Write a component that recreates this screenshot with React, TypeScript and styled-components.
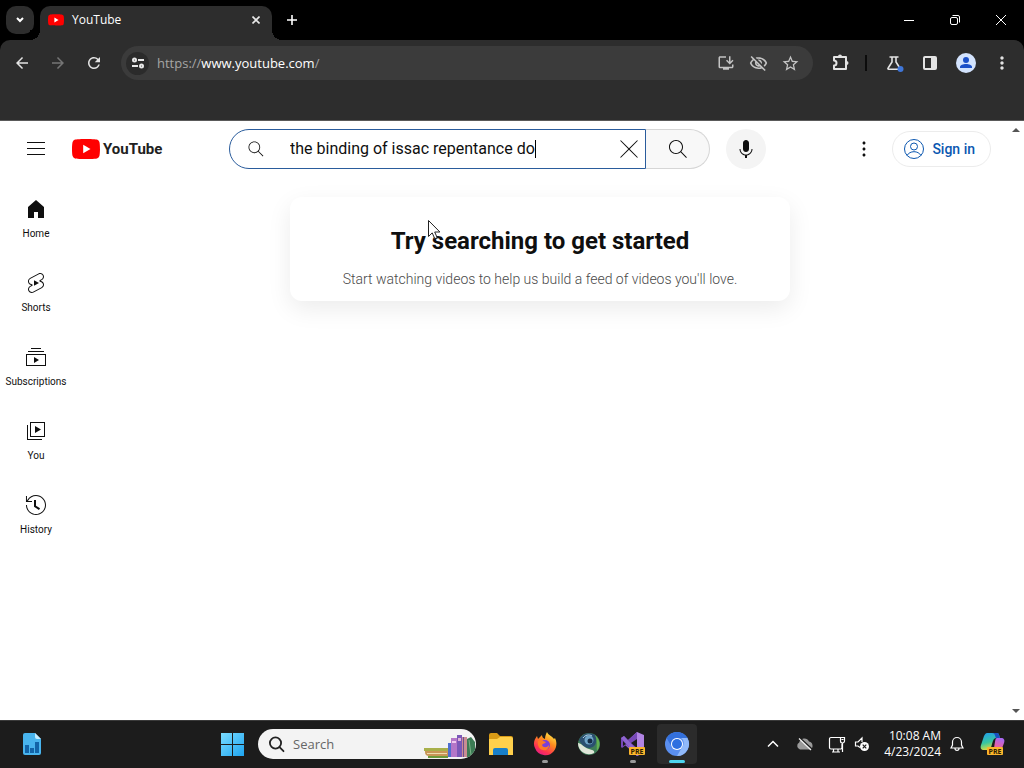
import React from "react";
import styled, { createGlobalStyle } from "styled-components";
import {
  MdArrowBack,
  MdArrowForward,
  MdRefresh,
  MdStarBorder,
  MdOutlineInstallDesktop,
  MdOutlineVisibilityOff,
  MdMoreVert,
} from "react-icons/md";

const GlobalStyle = createGlobalStyle`
  * { box-sizing: border-box; }
  html, body { margin: 0; padding: 0; background: #fff; }
  button { font: inherit; color: inherit; border: 0; padding: 0; background: none; cursor: pointer; }
  svg { display: block; flex: none; }
  h1, p, ul { margin: 0; padding: 0; }
`;

const UI_FONT = `"Open Sans", "Noto Sans", sans-serif`;
const PAGE_FONT = `Roboto, "Liberation Sans", sans-serif`;

const Desktop = styled.div`
  min-height: 100vh;
  display: flex;
  flex-direction: column;
`;

/* ---------- Browser frame ---------- */

const TabStrip = styled.header`
  display: flex;
  align-items: flex-end;
  height: 40px;
  background: #000;
  color: #fff;
  font-family: ${UI_FONT};
`;

const TabListButton = styled.button`
  display: grid;
  place-items: center;
  width: 28px;
  height: 28px;
  margin: 0 6px;
  align-self: center;
  border-radius: 10px;
  background: #2d2d2d;
`;

const Tab = styled.div`
  position: relative;
  display: flex;
  align-items: center;
  gap: 8px;
  width: 232px;
  height: 34px;
  padding: 0 8px 6px;
  border-radius: 10px 10px 0 0;
  background: #2d2d2d;
  font-size: 12px;
  line-height: 16px;

  &::before,
  &::after {
    content: "";
    position: absolute;
    bottom: 0;
    width: 10px;
    height: 10px;
  }
  &::before {
    right: 100%;
    background: radial-gradient(circle at 0 0, #000 10px, #2d2d2d 10px);
  }
  &::after {
    left: 100%;
    background: radial-gradient(circle at 100% 0, #000 10px, #2d2d2d 10px);
  }
`;

const TabTitle = styled.span`
  flex: 1;
`;

const SmallButton = styled.button`
  display: grid;
  place-items: center;
  width: 16px;
  height: 16px;
`;

const NewTabButton = styled.button`
  display: grid;
  place-items: center;
  width: 28px;
  height: 28px;
  margin-left: 6px;
  align-self: center;
`;

const WindowControls = styled.div`
  display: flex;
  margin-left: auto;
  height: 40px;
`;

const WindowButton = styled.button`
  display: grid;
  place-items: center;
  width: 46px;
`;

const ToolbarBack = styled.div`
  background: #000;
`;

const Toolbar = styled.nav`
  display: flex;
  align-items: center;
  height: 81px;
  padding: 0 8px 34px;
  border-radius: 10px 10px 0 0;
  border-bottom: 1px solid #5a5a5a;
  background: #2d2d2d;
  color: #dedede;
  font-family: ${UI_FONT};
`;

const NavButtons = styled.div`
  display: flex;
  gap: 8px;
`;

const ToolButton = styled.button<{ $dim?: boolean }>`
  position: relative;
  display: grid;
  place-items: center;
  width: 28px;
  height: 28px;
  color: ${(p) => (p.$dim ? "#757575" : "#e3e3e3")};
`;

const Omnibox = styled.div`
  display: flex;
  align-items: center;
  flex: 1;
  height: 34px;
  margin: 0 13px;
  padding: 0 9px 0 5px;
  border-radius: 17px;
  background: #3b3b3b;
`;

const SiteInfo = styled.button`
  display: grid;
  place-items: center;
  width: 23px;
  height: 23px;
  border-radius: 50%;
  background: #2b2b2b;
`;

const Address = styled.span`
  flex: 1;
  margin-left: 8px;
  font-size: 13px;
  line-height: 20px;
  color: #a5a5a5;

  b {
    font-weight: 400;
    color: #fff;
  }
`;

const OmniActions = styled.div`
  display: flex;
  gap: 4px;
  color: #c4c4c4;
`;

const OmniButton = styled.button`
  display: grid;
  place-items: center;
  width: 28px;
  height: 28px;
`;

const Divider = styled.span`
  width: 2px;
  height: 16px;
  margin: 0 13px 0 11px;
  background: #0c0c0c;
`;

/* ---------- Page ---------- */

const Viewport = styled.div`
  flex: 1;
  display: flex;
  background: #fff;
  color: #0f0f0f;
  font-family: ${PAGE_FONT};
`;

const Site = styled.div`
  flex: 1;
  min-width: 0;
`;

const ScrollBar = styled.div`
  display: flex;
  flex-direction: column;
  justify-content: space-between;
  align-items: center;
  width: 16px;
  padding: 7px 0;
  background: #fff;
`;

const Masthead = styled.header`
  display: flex;
  align-items: center;
  height: 56px;
  padding: 0 17px 0 24px;
`;

const Brand = styled.div`
  display: flex;
  align-items: center;
  gap: 24px;
  width: 205px;
`;

const IconButton = styled.button`
  display: grid;
  place-items: center;
  width: 24px;
  height: 24px;
`;

const LogoLink = styled.a`
  display: flex;
  align-items: center;
  gap: 3px;
  color: #212121;
  text-decoration: none;
  font: 700 15px/24px Roboto, "Liberation Sans", sans-serif;
`;

const SearchForm = styled.form`
  display: flex;
  flex: 1;
  height: 40px;
`;

const SearchBox = styled.label`
  display: flex;
  align-items: center;
  flex: 1;
  min-width: 0;
  padding: 0 4px 0 16px;
  border: 1px solid #2a5c9c;
  border-radius: 20px 0 0 20px;
  background: #fff;
`;

const SearchInput = styled.input`
  width: 245px;
  min-width: 0;
  height: 24px;
  margin: 0 0 0 24px;
  padding: 0;
  border: 0;
  outline: 0;
  background: none;
  color: #0f0f0f;
  font: 400 16px/24px ${PAGE_FONT};
`;

const Caret = styled.span`
  width: 1px;
  height: 18px;
  background: #000;
`;

const ClearButton = styled(IconButton)`
  margin-left: auto;
`;

const SubmitButton = styled.button`
  display: grid;
  place-items: center;
  width: 64px;
  border: 1px solid #d6d6d6;
  border-left: 0;
  border-radius: 0 20px 20px 0;
  background: #f8f8f8;
`;

const MicButton = styled.button`
  display: grid;
  place-items: center;
  width: 40px;
  height: 40px;
  margin-left: 16px;
  border-radius: 50%;
  background: #f4f4f4;
`;

const Account = styled.div`
  display: flex;
  align-items: center;
  gap: 16px;
  margin-left: 86px;
`;

const SignIn = styled.a`
  display: flex;
  align-items: center;
  gap: 6px;
  height: 36px;
  padding: 0 15px 0 9px;
  border: 1px solid #ececec;
  border-radius: 18px;
  color: #0b57b0;
  font-size: 14px;
  font-weight: 500;
  text-decoration: none;
`;

const Body = styled.div`
  display: flex;
`;

const MiniGuide = styled.nav`
  width: 72px;
  padding-top: 4px;
`;

const GuideLink = styled.a`
  display: flex;
  flex-direction: column;
  align-items: center;
  gap: 6px;
  height: 74px;
  padding-top: 16px;
  color: #0f0f0f;
  font-size: 10px;
  line-height: 14px;
  text-decoration: none;
`;

const Feed = styled.main`
  flex: 1;
  display: flex;
  justify-content: center;
  align-items: flex-start;
  padding: 20px 16px;
`;

const Nudge = styled.section`
  position: relative;
  width: 500px;
  max-width: 100%;
  padding: 28px 24px 12px;
  border-radius: 12px;
  box-shadow: 0 8px 24px rgba(0, 0, 0, 0.08);
  text-align: center;

  h1 {
    font-size: 24px;
    font-weight: 700;
    line-height: 32px;
  }
  p {
    margin-top: 12px;
    color: #4a4a4a;
    font-size: 14px;
    font-weight: 300;
    line-height: 20px;
  }
`;

const Pointer = styled.svg`
  position: absolute;
  left: 138px;
  top: 23px;
`;

/* ---------- Taskbar ---------- */

const Taskbar = styled.footer`
  display: flex;
  align-items: center;
  height: 48px;
  box-shadow: inset 0 1px #3a3a3a;
  background: #1c1c1c;
  color: #fff;
  font-family: ${UI_FONT};
`;

const Widgets = styled.div`
  display: flex;
  flex: 1;
  padding-left: 20px;
`;

const Apps = styled.div`
  display: flex;
  align-items: center;
`;

const AppButton = styled.button<{ $state?: "running" | "active" }>`
  position: relative;
  display: grid;
  place-items: center;
  width: 40px;
  height: 40px;
  margin: 0 2px;
  border-radius: 4px;
  background: ${(p) => (p.$state === "active" ? "#2b2b2b" : "none")};

  &::after {
    content: "";
    display: ${(p) => (p.$state ? "block" : "none")};
    position: absolute;
    bottom: 1px;
    left: 50%;
    transform: translateX(-50%);
    width: ${(p) => (p.$state === "active" ? "16px" : "6px")};
    height: 3px;
    border-radius: 2px;
    background: ${(p) => (p.$state === "active" ? "#4cd4ee" : "#9a9a9a")};
  }
`;

const TaskSearch = styled.label`
  display: flex;
  align-items: center;
  gap: 8px;
  width: 218px;
  height: 30px;
  margin: 0 3px 0 4px;
  padding-left: 10px;
  border-radius: 15px;
  overflow: hidden;
  background: #f3f3f3;
  color: #2b2b2b;

  input {
    flex: 1;
    min-width: 0;
    padding: 0;
    border: 0;
    outline: 0;
    background: none;
    font: 400 13px/20px ${UI_FONT};
  }
  input::placeholder {
    color: #666;
    opacity: 1;
  }
`;

const Tray = styled.div`
  display: flex;
  align-items: center;
  margin-left: 58px;
  padding-right: 18px;
`;

const TrayButton = styled.button<{ $narrow?: boolean }>`
  display: grid;
  place-items: center;
  width: ${(p) => (p.$narrow ? "18px" : "32px")};
  height: 32px;
`;

const Clock = styled.time`
  width: 70px;
  text-align: right;
  font-size: 12px;
  line-height: 16px;
  white-space: nowrap;
`;

const BellButton = styled(TrayButton)`
  margin-right: 7px;
`;

const Glyph = ({ d, size = 24 }: { d: string; size?: number }) => (
  <svg width={size} height={size} viewBox="0 0 24 24" fill="currentColor" aria-hidden="true">
    <path d={d} />
  </svg>
);

const SEARCH =
  "m20.87 20.17-5.59-5.59C16.35 13.35 17 11.75 17 10c0-3.87-3.13-7-7-7s-7 3.13-7 7 3.13 7 7 7c1.75 0 3.35-.65 4.58-1.71l5.59 5.59.7-.71zM10 16c-3.31 0-6-2.69-6-6s2.69-6 6-6 6 2.69 6 6-2.69 6-6 6z";
const CLOSE =
  "m12.71 12 8.15 8.15-.71.71L12 12.71l-8.15 8.15-.71-.71L11.29 12 3.15 3.85l.71-.71L12 11.29l8.15-8.15.71.71L12.71 12z";
const MIC =
  "M12 3c-1.66 0-3 1.37-3 3.07v5.86c0 1.7 1.34 3.07 3 3.07s3-1.37 3-3.07V6.07C15 4.37 13.66 3 12 3zm6.5 9h-1c0 3.03-2.47 5.5-5.5 5.5S6.5 15.03 6.5 12h-1c0 3.24 2.39 5.93 5.5 6.41V21h2v-2.59c3.11-.48 5.5-3.17 5.5-6.41z";

const guide = [
  { label: "Home", d: "M4 21V10.08l8-6.96 8 6.96V21h-6v-6h-4v6H4z" },
  {
    label: "Shorts",
    d: "M10 14.65v-5.3L15 12l-5 2.65zm7.77-4.33-1.2-.5L18 9.06c1.84-.96 2.53-3.23 1.56-5.06s-3.24-2.53-5.07-1.56L6 6.94c-1.29.68-2.07 2.04-2 3.49.07 1.42.93 2.67 2.22 3.25.03.01 1.2.5 1.2.5L6 14.93c-1.83.97-2.53 3.24-1.56 5.07.97 1.83 3.24 2.53 5.07 1.56l8.5-4.5c1.29-.68 2.06-2.04 1.99-3.49-.07-1.42-.94-2.68-2.23-3.25zm-.23 5.86-8.5 4.5c-1.34.71-3.01.2-3.72-1.14-.71-1.34-.2-3.01 1.14-3.72l2.04-1.08v-1.21l-.69-.28-1.11-.46c-.99-.41-1.65-1.35-1.7-2.41-.05-1.06.52-2.06 1.46-2.56l8.5-4.5c1.34-.71 3.01-.2 3.72 1.14.71 1.34.2 3.01-1.14 3.72L15.5 9.26v1.21l1.8.74c.99.41 1.65 1.35 1.7 2.41.05 1.06-.52 2.06-1.46 2.56z",
  },
  { label: "Subscriptions", d: "M10 18v-6l5 3-5 3zm7-15H7v1h10V3zm3 3H4v1h16V6zm2 3H2v12h20V9zM3 10h18v10H3V10z" },
  { label: "You", d: "m11 7 6 3.5-6 3.5V7zm7 13H4V6H3v15h15v-1zm3-2H6V3h15v15zM7 17h13V4H7v13z" },
  {
    label: "History",
    d: "M14.97 16.95 10 13.87V7h2v5.76l4.03 2.49-1.06 1.7zM22 12c0 5.51-4.49 10-10 10S2 17.51 2 12h1c0 4.96 4.04 9 9 9s9-4.04 9-9-4.04-9-9-9C8.81 3 5.92 4.64 4.28 7.38c-.11.18-.22.37-.31.56L3.94 8H8v1H1.96V3h1v4.74c.04-.09.07-.17.11-.25.11-.22.23-.42.35-.63C5.22 3.86 8.51 2 12 2c5.51 0 10 4.49 10 10z",
  },
];

const PlayBadge = ({ width, height }: { width: number; height: number }) => (
  <svg width={width} height={height} viewBox="0 0 28 20" aria-hidden="true">
    <path
      fill="#f00"
      d="M27.4 3.1A3.5 3.5 0 0 0 25 .6C22.8 0 14 0 14 0S5.200 0 3 .6A3.500 3.500 0 0 0 .6 3.100C0 5.300 0 10 0 10s0 4.700.6 6.900A3.500 3.500 0 0 0 3 19.400C5.200 20 14 20 14 20s8.800 0 11-.6a3.500 3.500 0 0 0 2.400-2.500C28 14.700 28 10 28 10s0-4.700-.6-6.900z"
    />
    <path fill="#fff" d="M11.200 14.300 18.500 10l-7.300-4.300z" />
  </svg>
);

const PreTag = ({ x, y }: { x: number; y: number }) => (
  <g>
    <rect x={x} y={y} width="16" height="8" rx="1" fill="#fbb52c" />
    <text x={x + 8} y={y + 7} textAnchor="middle" fontFamily="Open Sans, sans-serif" fontSize="7" fontWeight="700" fill="#2b1c00">
      PRE
    </text>
  </g>
);

const WidgetIcon = () => (
  <svg width="24" height="24" viewBox="0 0 24 24">
    <path d="M5 1h10l6 6v14a2 2 0 0 1-2 2H5a2 2 0 0 1-2-2V3a2 2 0 0 1 2-2z" fill="#48b4ee" />
    <path d="M15 1l6 6h-4a2 2 0 0 1-2-2z" fill="#c5edff" />
    <path d="M5 13h4v8H5zM10 16h4v5h-4zM15 10h4v11h-4z" fill="#1264a8" />
  </svg>
);

const StartIcon = () => (
  <svg width="24" height="24" viewBox="0 0 24 24">
    <defs>
      <linearGradient id="win" x1="0" y1="0" x2="1" y2="1" gradientUnits="objectBoundingBox">
        <stop offset="0" stopColor="#7adcff" />
        <stop offset="1" stopColor="#1ea4f0" />
      </linearGradient>
    </defs>
    <path fill="url(#win)" d="M1 1h11v11H1zM13 1h11v11H13zM1 13h11v11H1zM13 13h11v11H13z" />
  </svg>
);

const BooksArt = () => (
  <svg width="52" height="30" viewBox="0 0 52 30">
    <path d="M0 19h24v3H0z" fill="#a8b04a" />
    <path d="M1 22h23v5H5a4 4 0 0 1-4-4z" fill="#c99657" />
    <path d="M3 24h20v1H3z" fill="#efdcae" />
    <path d="M4 27h20v2H4z" fill="#6e9a3c" />
    <rect x="24" y="14" width="3" height="14" fill="#4f6fd0" />
    <rect x="27" y="9" width="6" height="19" fill="#b476c8" />
    <rect x="28" y="12" width="4" height="2" fill="#f0c8f0" />
    <rect x="33" y="6" width="5" height="22" fill="#7b58b8" />
    <rect x="34" y="9" width="3" height="3" fill="#e0b0d8" />
    <rect x="38" y="8" width="5" height="20" fill="#c98c94" />
    <path d="M39 8h1v20h-1z" fill="#6a5390" />
    <path d="M43 10l4-2 4 5v13l-5 2h-3z" fill="#3c7a54" />
    <path d="M45 11l2 15" stroke="#7ab486" />
  </svg>
);

const ExplorerIcon = () => (
  <svg width="26" height="24" viewBox="0 0 26 24">
    <path d="M1 3a2 2 0 0 1 2-2h6l3 3h11a2 2 0 0 1 2 2v4H1z" fill="#d99b16" />
    <path d="M1 7h8l3-2h11a2 2 0 0 1 2 2v16H1z" fill="#ffd04c" />
    <path d="M5 23v-5a2 2 0 0 1 2-2h11a2 2 0 0 1 2 2v5z" fill="#187fc9" />
  </svg>
);

const FirefoxIcon = () => (
  <svg width="24" height="24" viewBox="0 0 24 24">
    <defs>
      <linearGradient id="fox" x1=".8" y1="0" x2=".2" y2="1">
        <stop offset="0" stopColor="#fff04a" />
        <stop offset=".4" stopColor="#ff8a1e" />
        <stop offset=".75" stopColor="#ff3350" />
        <stop offset="1" stopColor="#e01890" />
      </linearGradient>
    </defs>
    <path
      fill="url(#fox)"
      d="M14 0c1 3 5 4 7 7l1-1c2 4 2 9-1 13a11 11 0 0 1-19-3C0 12 1 8 4 4l1 3 4-4c0 2 1 3 3 4 0-3 1-5 2-7z"
    />
    <circle cx="12" cy="13" r="5" fill="#7a3fd8" />
    <path d="M5 9c3-2 5 0 8 1-1 2-3 1-4 3 1 3 5 3 7 0 0 4-3 6-6 5-3 0-6-4-5-9z" fill="#ff7a24" />
  </svg>
);

const GlobeIcon = () => (
  <svg width="24" height="24" viewBox="0 0 24 24">
    <circle cx="12" cy="12" r="11" fill="#3e7c58" />
    <path d="M2 8A11 11 0 0 1 18 3c3 7 0 13-6 13-5 0-8-4-10-8z" fill="#2b4f70" />
    <path d="M1 11c3 0 5 4 11 6 4 1 6 2 5 4A11 11 0 0 1 1 11z" fill="#dfe5d8" />
    <circle cx="12" cy="8" r="4.500" fill="#6fa4c8" />
    <circle cx="13" cy="9" r="2.500" fill="#142c46" />
    <path d="M6 6c2-3 6-4 9-2" stroke="#b8d8ea" fill="none" />
    <path d="M18 3c5 4 6 11 2 16-1-5 1-10-2-16z" fill="#62b050" />
  </svg>
);

const StudioIcon = () => (
  <svg width="28" height="26" viewBox="0 0 28 26">
    <path d="M18 1l7 3v18l-7 3L5 13z" fill="#b184e4" />
    <path d="M18 1v24L7 14l-4 3-1-1V7l3-2 4 4z" fill="#7748b8" />
    <path d="M18 8v9l-6-5z" fill="#1c1c1c" />
    <path d="M4 10v5l3-2z" fill="#1c1c1c" />
    <path d="M2 7l3-2 13 14v6z" fill="#8f65d0" />
    <PreTag x={10} y={16} />
  </svg>
);

const ChromiumIcon = () => (
  <svg width="26" height="26" viewBox="0 0 26 26">
    <circle cx="13" cy="13" r="12" fill="#5a8ff0" />
    <path d="M2.600 7A12 12 0 0 1 23.400 7H13a6 6 0 0 0-5.200 9z" fill="#3370dc" />
    <path d="M23.400 7A12 12 0 0 1 13 25l5.200-9a6 6 0 0 0-1-9z" fill="#90b9fa" />
    <circle cx="13" cy="13" r="6" fill="#fff" />
    <circle cx="13" cy="13" r="5" fill="#2d6fe0" />
  </svg>
);

const CopilotIcon = () => (
  <svg width="26" height="26" viewBox="0 0 26 26">
    <defs>
      <linearGradient id="copA" x1="0" y1="0" x2=".3" y2="1">
        <stop offset="0" stopColor="#1f9cf0" />
        <stop offset=".6" stopColor="#38c6a0" />
        <stop offset="1" stopColor="#d8dc40" />
      </linearGradient>
      <linearGradient id="copB" x1=".6" y1="0" x2=".3" y2="1">
        <stop offset="0" stopColor="#a868f0" />
        <stop offset=".6" stopColor="#f0609a" />
        <stop offset="1" stopColor="#ffa060" />
      </linearGradient>
    </defs>
    <path d="M7 2h10c2 0 2 2 3 5h-4c-2 0-3 2-4 6s-2 6-5 6H4c-3 0-4-2-3-5L4 5c1-2 2-3 3-3z" fill="url(#copA)" />
    <path d="M12 2h5c2 0 2 2 3 5h-4c-1-2-1-5-4-5z" fill="#1a50c0" />
    <path d="M17 7h4c3 0 4 2 3 5l-3 8c-1 2-2 3-4 3h-6c2-1 3-4 3-6 1-5 1-10 3-10z" fill="url(#copB)" />
    <PreTag x={7} y={16} />
  </svg>
);

export default function App() {
  return (
    <Desktop>
      <GlobalStyle />
      <TabStrip>
        <TabListButton aria-label="Search tabs">
          <svg width="10" height="10" viewBox="0 0 10 10" fill="none" stroke="#fff" strokeWidth="2">
            <path d="M2 3l3 3 3-3" />
          </svg>
        </TabListButton>
        <Tab>
          <PlayBadge width={16} height={12} />
          <TabTitle>YouTube</TabTitle>
          <SmallButton aria-label="Close tab">
            <svg width="8" height="8" viewBox="0 0 8 8" stroke="#e8e8e8" strokeWidth="1.600">
              <path d="M.5.500l7 7M7.500.500l-7 7" />
            </svg>
          </SmallButton>
        </Tab>
        <NewTabButton aria-label="New tab">
          <svg width="10" height="10" viewBox="0 0 10 10" stroke="#fff" strokeWidth="1.600">
            <path d="M5 0v10M0 5h10" />
          </svg>
        </NewTabButton>
        <WindowControls>
          <WindowButton aria-label="Minimize">
            <svg width="10" height="10" viewBox="0 0 10 10" stroke="#fff">
              <path d="M0 5.500h10" />
            </svg>
          </WindowButton>
          <WindowButton aria-label="Restore">
            <svg width="10" height="10" viewBox="0 0 10 10" fill="none" stroke="#fff">
              <rect x=".5" y="2.500" width="7" height="7" rx="1.500" />
              <path d="M2.500.500H8A1.500 1.500 0 0 1 9.500 2v5.500" />
            </svg>
          </WindowButton>
          <WindowButton aria-label="Close">
            <svg width="10" height="10" viewBox="0 0 10 10" stroke="#fff">
              <path d="M0 0l10 10M10 0L0 10" />
            </svg>
          </WindowButton>
        </WindowControls>
      </TabStrip>

      <ToolbarBack>
        <Toolbar>
          <NavButtons>
            <ToolButton aria-label="Back"><MdArrowBack size={18} /></ToolButton>
            <ToolButton aria-label="Forward" $dim><MdArrowForward size={18} /></ToolButton>
            <ToolButton aria-label="Reload"><MdRefresh size={18} /></ToolButton>
          </NavButtons>
          <Omnibox>
            <SiteInfo aria-label="View site information">
              <svg width="14" height="14" viewBox="0 0 14 14" fill="none" stroke="#e8e8e8" strokeWidth="2">
                <circle cx="3.500" cy="4" r="1.500" />
                <path d="M7 4h6M1 10h6" />
                <circle cx="10.500" cy="10" r="1.500" />
              </svg>
            </SiteInfo>
            <Address>
              https://<b>www.youtube.com</b>/
            </Address>
            <OmniActions>
              <OmniButton aria-label="Install app"><MdOutlineInstallDesktop size={18} /></OmniButton>
              <OmniButton aria-label="Third-party cookies blocked"><MdOutlineVisibilityOff size={19} /></OmniButton>
              <OmniButton aria-label="Bookmark this tab"><MdStarBorder size={19} /></OmniButton>
            </OmniActions>
          </Omnibox>
          <ToolButton aria-label="Extensions">
            <svg width="20" height="20" viewBox="0 0 20 20" fill="none" stroke="#e3e3e3" strokeWidth="2" strokeLinejoin="round">
              <path d="M4 4h12v12H4v-3.500a2.500 2.500 0 0 0 0-5z" />
              <path d="M8 3.500a2 2 0 0 1 4 0zM16.500 8a2 2 0 0 1 0 4z" fill="#e3e3e3" stroke="none" />
            </svg>
          </ToolButton>
          <Divider />
          <NavButtons>
            <ToolButton aria-label="Experiments">
              <svg width="20" height="20" viewBox="0 0 20 20" fill="none" stroke="#e3e3e3" strokeWidth="1.600">
                <path d="M5.500 4h9M8 4v5L4 15.200a.7.7 0 0 0 .6 1.100h10.800a.7.7 0 0 0 .6-1.100L12 9V4" />
                <circle cx="16.500" cy="16" r="3" fill="#3f76d8" stroke="none" />
              </svg>
            </ToolButton>
            <ToolButton aria-label="Side panel">
              <svg width="16" height="16" viewBox="0 0 16 16">
                <rect x="1" y="1" width="14" height="14" rx="2" fill="#e3e3e3" />
                <rect x="3" y="3" width="6" height="10" fill="#2d2d2d" />
              </svg>
            </ToolButton>
            <ToolButton aria-label="Profile">
              <svg width="20" height="20" viewBox="0 0 20 20">
                <circle cx="10" cy="10" r="10" fill="#d3e3fd" />
                <circle cx="10" cy="7" r="3" fill="#1b50c8" />
                <path d="M4 15v-1c0-2 3-3 6-3s6 1 6 3v1z" fill="#1b50c8" />
              </svg>
            </ToolButton>
            <ToolButton aria-label="Menu"><MdMoreVert size={20} /></ToolButton>
          </NavButtons>
        </Toolbar>
      </ToolbarBack>

      <Viewport>
        <Site>
          <Masthead>
            <Brand>
              <IconButton aria-label="Guide">
                <Glyph d="M21 6H3V5h18v1zm0 6H3v-1h18v1zm0 6H3v-1h18v1z" />
              </IconButton>
              <LogoLink href="#">
                <PlayBadge width={28} height={20} />
                YouTube
              </LogoLink>
            </Brand>
            <SearchForm onSubmit={(e) => e.preventDefault()}>
              <SearchBox>
                <Glyph d={SEARCH} size={20} />
                <SearchInput aria-label="Search" defaultValue="the binding of issac repentance do" spellCheck={false} />
                <Caret />
                <ClearButton type="button" aria-label="Clear search">
                  <Glyph d={CLOSE} />
                </ClearButton>
              </SearchBox>
              <SubmitButton aria-label="Search">
                <Glyph d={SEARCH} />
              </SubmitButton>
            </SearchForm>
            <MicButton aria-label="Search with your voice">
              <Glyph d={MIC} />
            </MicButton>
            <Account>
              <IconButton aria-label="Settings">
                <Glyph d="M12 16.500c.83 0 1.500.67 1.500 1.500s-.67 1.500-1.500 1.500-1.500-.67-1.500-1.500.67-1.500 1.500-1.500zM10.500 12c0 .83.67 1.500 1.500 1.500s1.500-.67 1.500-1.500-.67-1.500-1.500-1.500-1.500.67-1.500 1.500zm0-6c0 .83.67 1.500 1.500 1.500s1.500-.67 1.500-1.500-.67-1.500-1.500-1.500-1.500.67-1.500 1.500z" />
              </IconButton>
              <SignIn href="#">
                <svg width="24" height="24" viewBox="0 0 24 24" fill="none" stroke="currentColor">
                  <circle cx="12" cy="12" r="9.500" />
                  <circle cx="12" cy="9.500" r="3.500" />
                  <path d="M5 18.500c1.500-2.500 4-3.800 7-3.800s5.500 1.300 7 3.800" />
                </svg>
                Sign in
              </SignIn>
            </Account>
          </Masthead>

          <Body>
            <MiniGuide>
              {guide.map((item) => (
                <GuideLink href="#" key={item.label}>
                  <Glyph d={item.d} />
                  {item.label}
                </GuideLink>
              ))}
            </MiniGuide>
            <Feed>
              <Nudge>
                <h1>Try searching to get started</h1>
                <p>Start watching videos to help us build a feed of videos you'll love.</p>
                <Pointer width="13" height="20" viewBox="0 0 13 20">
                  <path d="M.5.500v16l3.700-3.600 2.600 5.800 2.400-1-2.500-5.700h5.200z" fill="#fff" stroke="#222" />
                </Pointer>
              </Nudge>
            </Feed>
          </Body>
        </Site>
        <ScrollBar aria-hidden="true">
          <svg width="8" height="4" viewBox="0 0 8 4" fill="#555"><path d="M0 4l4-4 4 4z" /></svg>
          <svg width="8" height="4" viewBox="0 0 8 4" fill="#555"><path d="M0 0l4 4 4-4z" /></svg>
        </ScrollBar>
      </Viewport>

      <Taskbar>
        <Widgets>
          <button aria-label="Widgets"><WidgetIcon /></button>
        </Widgets>
        <Apps>
          <AppButton aria-label="Start"><StartIcon /></AppButton>
          <TaskSearch>
            <svg width="17" height="17" viewBox="0 0 17 17" fill="none" stroke="#222" strokeWidth="1.800">
              <circle cx="7.500" cy="7" r="5.600" />
              <path d="M11.500 11.200l4 4" strokeLinecap="round" />
            </svg>
            <input type="text" aria-label="Search the taskbar" placeholder="Search" />
            <BooksArt />
          </TaskSearch>
          <AppButton aria-label="File Explorer"><ExplorerIcon /></AppButton>
          <AppButton aria-label="Firefox" $state="running"><FirefoxIcon /></AppButton>
          <AppButton aria-label="Browser"><GlobeIcon /></AppButton>
          <AppButton aria-label="Visual Studio Preview" $state="running"><StudioIcon /></AppButton>
          <AppButton aria-label="Chromium" $state="active"><ChromiumIcon /></AppButton>
        </Apps>
        <Tray>
          <TrayButton aria-label="Show hidden icons">
            <svg width="12" height="8" viewBox="0 0 12 8" fill="none" stroke="#fff" strokeWidth="1.500">
              <path d="M1 6.500l5-5 5 5" />
            </svg>
          </TrayButton>
          <TrayButton aria-label="OneDrive">
            <svg width="18" height="14" viewBox="0 0 18 14">
              <path d="M4 12.500a3.800 3.800 0 0 1-.8-7A5.200 5.200 0 0 1 13 4.500a4.200 4.200 0 0 1 1 8z" fill="#9a9a9a" />
              <path d="M4 1l12 11" stroke="#1c1c1c" strokeWidth="1.500" />
              <path d="M3 1.500l12 11.500" stroke="#f0f0f0" strokeWidth="1.200" />
            </svg>
          </TrayButton>
          <TrayButton aria-label="Network">
            <svg width="18" height="17" viewBox="0 0 18 17" fill="none" stroke="#fff" strokeWidth="1.200">
              <path d="M12 1.500H3A1.500 1.500 0 0 0 1.500 3v8.500A1.500 1.500 0 0 0 3 13h9.500a1.500 1.500 0 0 0 1.500-1.500V8M5.500 13v3M10 13v3M4 16h8" />
              <path d="M12.500 1.500h4V5a2 2 0 0 1-4 0zM14.500 7v9M13.500 3.500h2" />
            </svg>
          </TrayButton>
          <TrayButton $narrow aria-label="Volume muted">
            <svg width="18" height="16" viewBox="0 0 18 16" fill="none" stroke="#fff" strokeWidth="1.200">
              <path d="M7 11.500 5 10H2.500V6H5l4-4v4" />
              <circle cx="11.500" cy="10.500" r="4.500" fill="#fff" stroke="none" />
              <path d="M9.700 8.700l3.600 3.600M13.300 8.700l-3.600 3.600" stroke="#1c1c1c" />
            </svg>
          </TrayButton>
          <Clock dateTime="2024-04-23T10:08">
            10:08 AM
            <br />
            4/23/2024
          </Clock>
          <BellButton aria-label="Notifications">
            <svg width="14" height="16" viewBox="0 0 14 16" fill="none" stroke="#fff" strokeWidth="1.200">
              <path d="M1 12l1.500-3V6a4.500 4.500 0 0 1 9 0v3l1.500 3zM5 12.500c0 2.500 4 2.500 4 0" />
            </svg>
          </BellButton>
          <button aria-label="Copilot Preview"><CopilotIcon /></button>
        </Tray>
      </Taskbar>
    </Desktop>
  );
}
